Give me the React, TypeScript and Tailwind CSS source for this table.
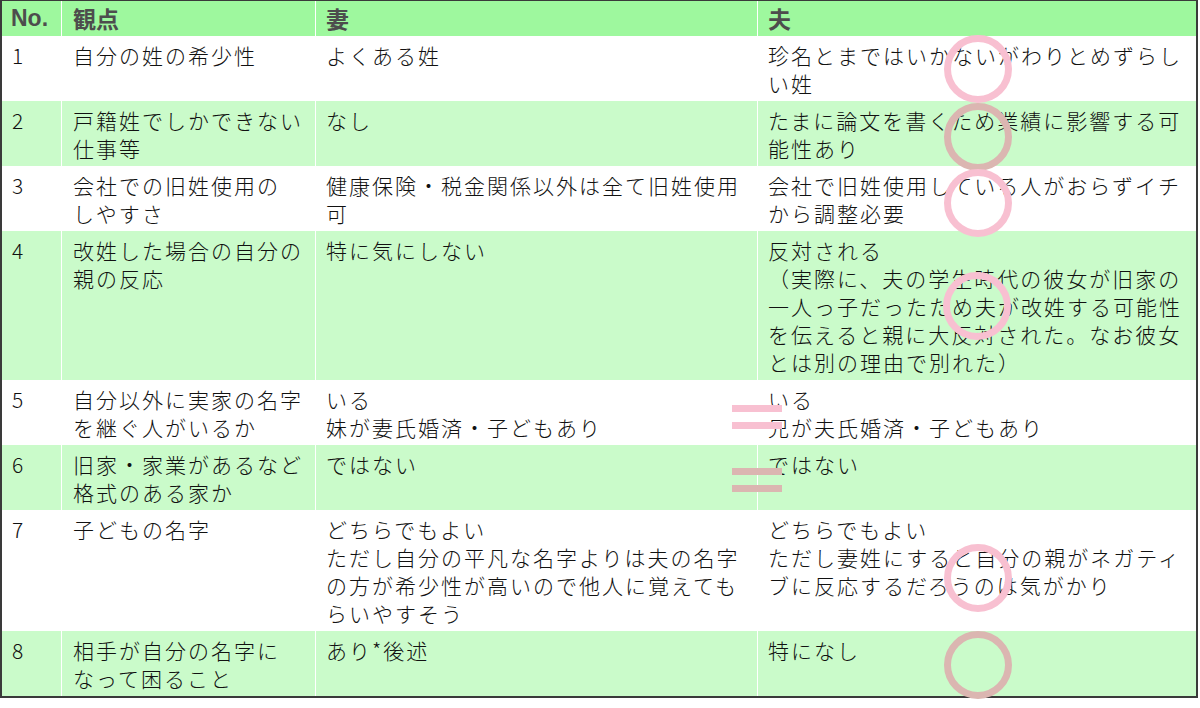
import React from "react";

type Row = { no: string; view: string[]; wife: string[]; husband: string[]; green: boolean };

const rows: Row[] = [
  { no: "1", view: ["自分の姓の希少性"], wife: ["よくある姓"], husband: ["珍名とまではいかないがわりとめずらし", "い姓"], green: false },
  { no: "2", view: ["戸籍姓でしかできない", "仕事等"], wife: ["なし"], husband: ["たまに論文を書くため業績に影響する可", "能性あり"], green: true },
  { no: "3", view: ["会社での旧姓使用の", "しやすさ"], wife: ["健康保険・税金関係以外は全て旧姓使用", "可"], husband: ["会社で旧姓使用している人がおらずイチ", "から調整必要"], green: false },
  {
    no: "4",
    view: ["改姓した場合の自分の", "親の反応"],
    wife: ["特に気にしない"],
    husband: ["反対される", "（実際に、夫の学生時代の彼女が旧家の", "一人っ子だったため夫が改姓する可能性", "を伝えると親に大反対された。なお彼女", "とは別の理由で別れた）"],
    green: true,
  },
  { no: "5", view: ["自分以外に実家の名字", "を継ぐ人がいるか"], wife: ["いる", "妹が妻氏婚済・子どもあり"], husband: ["いる", "兄が夫氏婚済・子どもあり"], green: false },
  { no: "6", view: ["旧家・家業があるなど", "格式のある家か"], wife: ["ではない"], husband: ["ではない"], green: true },
  {
    no: "7",
    view: ["子どもの名字"],
    wife: ["どちらでもよい", "ただし自分の平凡な名字よりは夫の名字", "の方が希少性が高いので他人に覚えても", "らいやすそう"],
    husband: ["どちらでもよい", "ただし妻姓にすると自分の親がネガティ", "ブに反応するだろうのは気がかり"],
    green: false,
  },
  { no: "8", view: ["相手が自分の名字に", "なって困ること"], wife: ["あり*後述"], husband: ["特になし"], green: true },
];

function Lines({ lines }: { lines: string[] }) {
  return (
    <>
      {lines.map((l, i) => (
        <div key={i} className="whitespace-nowrap">
          {l}
        </div>
      ))}
    </>
  );
}

function Circle({ x, y, color }: { x: number; y: number; color: string }) {
  return (
    <svg
      className="absolute pointer-events-none"
      style={{ left: x - 36, top: y - 36 }}
      width={72}
      height={72}
      viewBox="0 0 72 72"
    >
      <circle cx={36} cy={36} r={30.5} fill="none" stroke={color} strokeWidth={7} />
    </svg>
  );
}

function EqualSign({ color, className }: { color: string; className: string }) {
  return (
    <div className={`absolute flex flex-col gap-[10px] w-[50px] ${className}`}>
      <div className="h-[7px]" style={{ background: color }} />
      <div className="h-[7px]" style={{ background: color }} />
    </div>
  );
}

export default function App() {
  const pink = "#f8c0d1";
  const brown = "#dbb6b1";
  return (
    <div className="relative w-[1200px] h-[708px] bg-white overflow-hidden" style={{ fontFamily: '"Noto Sans CJK JP", "Noto Sans", sans-serif' }}>
      <div className="w-[1198px] border-l-2 border-t border-r-2 border-b-2 border-[#3a3a3a]">
        <div className="grid grid-cols-[59px_254px_442px_1fr] h-[35px] bg-[#9ef89e] text-[23px] font-bold text-[#4d4d4d]">
          <div className="pl-[9px] flex items-center" style={{ fontFamily: '"Liberation Sans", sans-serif' }}>No.</div>
          <div className="pl-[11px] flex items-center border-l border-white">観点</div>
          <div className="pl-[10px] flex items-center border-l border-white">妻</div>
          <div className="pl-[10px] flex items-center border-l border-white">夫</div>
        </div>
        {rows.map((r) => (
          <div
            key={r.no}
            className={`grid grid-cols-[59px_254px_442px_1fr] text-[21px] leading-[28px] tracking-[2px] font-light text-[#111] ${r.green ? "bg-[#cafbca]" : "bg-white"}`}
          >
            <div className="pl-[10px] pt-[5px] pb-[4px]">{r.no}</div>
            <div className="pl-[11px] pt-[5px] pb-[4px] border-l border-white">
              <Lines lines={r.view} />
            </div>
            <div className="pl-[10px] pt-[5px] pb-[4px] border-l border-white">
              <Lines lines={r.wife} />
            </div>
            <div className="pl-[10px] pt-[5px] pb-[4px] border-l border-white">
              <Lines lines={r.husband} />
            </div>
          </div>
        ))}
      </div>

      <Circle x={978} y={69} color={pink} />
      <Circle x={978} y={137} color={brown} />
      <Circle x={978} y={203} color={pink} />
      <Circle x={977} y={306} color={pink} />
      <Circle x={978} y={578} color={pink} />
      <Circle x={978} y={665} color={brown} />

      <EqualSign color={pink} className="left-[732px] top-[405px]" />
      <EqualSign color={brown} className="left-[732px] top-[468px]" />
    </div>
  );
}
